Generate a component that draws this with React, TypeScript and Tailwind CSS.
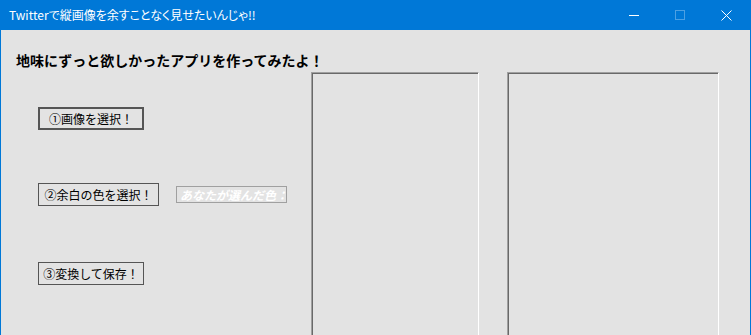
import React from 'react'

const jp = { fontFamily: '"Noto Sans CJK JP", "Noto Sans", sans-serif' }

const WinButton = ({ label, focused }: { label: string; focused?: boolean }) => (
    <button
        className={
            'w-full h-[23px] bg-[#e3e3e3] text-[12px] leading-none text-black flex items-center justify-center ' +
            (focused ? 'border-2 border-[#555555]' : 'border border-[#555555]')
        }
    >
        {label}
    </button>
)

const PictureBox = ({ width }: { width: string }) => (
    <div className={`${width} shrink-0 h-[280px] border-t border-l border-t-[#a0a0a0] border-l-[#a0a0a0] border-r border-b border-r-white border-b-white`}>
        <div className="w-full h-full border-t border-l border-[#696969] border-r-0 border-b-0 bg-[#e3e3e3]" />
    </div>
)

export default function App() {
    return (
        <div className="w-[751px] h-[335px] overflow-hidden bg-[#e3e3e3] border-x border-[#0078d7] flex flex-col" style={jp}>
            {/* title bar */}
            <div className="h-[30px] shrink-0 bg-[#0078d7] flex items-center text-white">
                <span className="ml-[8px] text-[12px] [font-feature-settings:'palt']">Twitterで縦画像を余すことなく見せたいんじゃ!!</span>
                <div className="ml-auto flex h-full">
                    <div className="w-[46px] h-full flex items-center justify-center">
                        <div className="w-[10px] h-px bg-white" />
                    </div>
                    <div className="w-[46px] h-full flex items-center justify-center">
                        <div className="w-[10px] h-[10px] border border-white/30" />
                    </div>
                    <div className="w-[46px] h-full flex items-center justify-center mr-[1px]">
                        <svg width="11" height="11" viewBox="0 0 11 11" stroke="white" strokeWidth="1">
                            <path d="M0.5 0.5 L10.5 10.5 M10.5 0.5 L0.5 10.5" />
                        </svg>
                    </div>
                </div>
            </div>

            {/* form body */}
            <div className="flex-1 flex flex-col">
                <h1 className="mt-[20px] ml-[15px] h-[20px] leading-[20px] text-[14px] font-bold text-black whitespace-nowrap">
                    地味にずっと欲しかったアプリを作ってみたよ！
                </h1>
                <div className="mt-[2px] flex items-start">
                    <div className="w-[310px] shrink-0 pl-[37px] flex flex-col items-start">
                        <div className="mt-[35px] w-[106px]">
                            <WinButton label="①画像を選択！" focused />
                        </div>
                        <div className="mt-[53px] flex items-center">
                            <div className="w-[121px]">
                                <WinButton label="②余白の色を選択！" />
                            </div>
                            <div className="ml-[17px] w-[111px] h-[17px] border border-[#a0a0a0] overflow-hidden flex items-center pl-[3px]">
                                <span className="text-[12px] font-bold italic text-white whitespace-nowrap leading-none">あなたが選んだ色：</span>
                            </div>
                        </div>
                        <div className="mt-[56px] w-[106px]">
                            <WinButton label="③変換して保存！" />
                        </div>
                    </div>
                    <PictureBox width="w-[168px]" />
                    <div className="w-[28px] shrink-0" />
                    <PictureBox width="w-[212px]" />
                </div>
            </div>
        </div>
    )
}
